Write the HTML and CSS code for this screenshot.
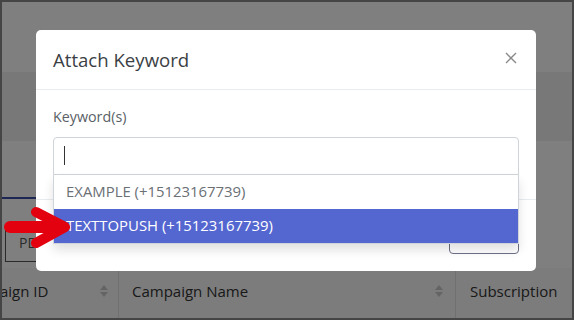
FILE: index.html
```html
<!DOCTYPE html>
<html lang="en">
<head>
    <meta charset="UTF-8">
    <meta name="viewport" content="width=device-width, initial-scale=1.0">
    <title>Attach Keyword</title>
    <link rel="stylesheet" href="styles.css">
</head>
<body>
    <div class="frame">
        <div class="page">
            <div class="top-band"></div>
            <div class="sub-band"></div>
            <div class="tabs">
                <div class="tab-line"></div>
                <div class="tab-box">PD</div>
            </div>
            <div class="table-head">
                <div class="th th-id">aign ID <span class="sort"></span></div>
                <div class="th th-name">Campaign Name <span class="sort"></span></div>
                <div class="th th-sub">Subscription</div>
            </div>
        </div>
        <div class="backdrop"></div>

        <div class="modal">
            <div class="modal-header">
                <h5 class="modal-title">Attach Keyword</h5>
                <span class="close">
                    <svg width="12" height="12" viewBox="0 0 12 12"><path d="M1 1L11 11M11 1L1 11" stroke="#8a8a8a" stroke-width="1.4"/></svg>
                </span>
            </div>
            <div class="modal-body">
                <label class="label">Keyword(s)</label>
                <div class="select-wrap">
                    <div class="input"><span class="caret"></span></div>
                    <ul class="dropdown">
                        <li class="option">EXAMPLE (+15123167739)</li>
                        <li class="option active">TEXTTOPUSH (+15123167739)</li>
                    </ul>
                </div>
            </div>
            <div class="modal-footer">
                <button class="btn">Save</button>
            </div>
        </div>

        <svg class="arrow" width="66" height="42" viewBox="0 0 66 42">
            <path d="M6 21H56" stroke="#e3000f" stroke-width="12" stroke-linecap="round"/>
            <path d="M32 6L61 21L32 37" fill="none" stroke="#e3000f" stroke-width="10" stroke-linecap="round" stroke-linejoin="round"/>
        </svg>
    </div>
</body>
</html>
```

FILE: styles.css
```css
body {
    margin: 0;
    font-family: 'Open Sans', 'Liberation Sans', sans-serif;
}
.frame {
    position: relative;
    width: 574px;
    height: 320px;
    box-sizing: border-box;
    border: 2px solid #454545;
    overflow: hidden;
    background: #fff;
}
.page {
    display: flex;
    flex-direction: column;
    height: 100%;
}
.top-band {
    height: 70px;
    background: #fff;
}
.sub-band {
    height: 69px;
    background: #f1f1f1;
}
.tabs {
    height: 127px;
    display: flex;
    flex-direction: column;
    padding-top: 56px;
    box-sizing: border-box;
}
.tab-line {
    width: 34px;
    height: 2px;
    background: #3c4ca8;
}
.tab-box {
    margin: 25px 0 0 3px;
    width: 80px;
    height: 38px;
    border: 1px solid #555;
    box-sizing: border-box;
    color: #555;
    font-size: 14px;
    line-height: 36px;
    padding-left: 13px;
}
.table-head {
    flex: 1;
    display: flex;
    background: #f8f8f8;
    color: #333;
    font-size: 15px;
}
.th {
    display: flex;
    align-items: center;
    box-sizing: border-box;
    border-right: 1px solid #e0e0e0;
    padding-bottom: 4px;
}
.th-id {
    width: 119px;
    justify-content: space-between;
    padding-right: 10px;
    margin-left: -2px;
}
.th-name {
    width: 337px;
    justify-content: space-between;
    padding-left: 13px;
    padding-right: 12px;
}
.th-sub {
    padding-left: 14px;
    border-right: 0;
}
.sort {
    width: 8px;
    height: 12px;
    position: relative;
}
.sort::before, .sort::after {
    content: "";
    position: absolute;
    left: 0;
    border-left: 4px solid transparent;
    border-right: 4px solid transparent;
}
.sort::before {
    top: 0;
    border-bottom: 5px solid #c8c8c8;
}
.sort::after {
    bottom: 0;
    border-top: 5px solid #c8c8c8;
}
.backdrop {
    position: absolute;
    inset: 0;
    background: rgba(0, 0, 0, 0.5);
}
.modal {
    position: absolute;
    left: 34px;
    top: 28px;
    width: 500px;
    height: 241px;
    background: #fff;
    border-radius: 5px;
    display: flex;
    flex-direction: column;
}
.modal-header {
    height: 60px;
    box-sizing: border-box;
    border-bottom: 1px solid #e9ecef;
    display: flex;
    align-items: center;
    justify-content: space-between;
    padding: 0 17px;
}
.modal-title {
    margin: 0;
    font-size: 18.6px;
    font-weight: 400;
    color: #3b3f45;
}
.close {
    display: flex;
    margin-right: 2px;
    margin-top: -3px;
}
.modal-body {
    height: 110px;
    padding: 17px 17px 0;
    box-sizing: border-box;
    border-bottom: 1px solid #e9ecef;
}
.label {
    display: block;
    font-size: 14.3px;
    color: #5a5f66;
    line-height: 20px;
    margin-bottom: 10px;
}
.select-wrap {
    position: relative;
    z-index: 2;
}
.input {
    height: 38px;
    box-sizing: border-box;
    border: 1px solid #ced4da;
    border-radius: 4px 4px 0 0;
    padding: 8px 10px;
}
.caret {
    display: block;
    width: 1px;
    height: 19px;
    background: #333;
}
.dropdown {
    list-style: none;
    margin: 0;
    padding: 0;
    background: #fff;
    border: 1px solid #ced4da;
    border-top: 0;
    box-shadow: 0 6px 10px rgba(0, 0, 0, 0.12);
}
.option {
    height: 34px;
    line-height: 32px;
    padding-left: 12px;
    font-size: 14.9px;
    color: #6b7075;
}
.option.active {
    background: #5466d0;
    color: #fff;
    font-weight: 500;
}
.modal-footer {
    flex: 1;
    display: flex;
    justify-content: flex-end;
    align-items: flex-end;
    padding: 0 17px 17px;
}
.btn {
    width: 70px;
    height: 38px;
    border: 1px solid #6c7086;
    border-radius: 4px;
    background: #fff;
    font-family: inherit;
    font-size: 14px;
    color: #6c7086;
}
.arrow {
    position: absolute;
    left: 2px;
    top: 204px;
    z-index: 5;
}
```
